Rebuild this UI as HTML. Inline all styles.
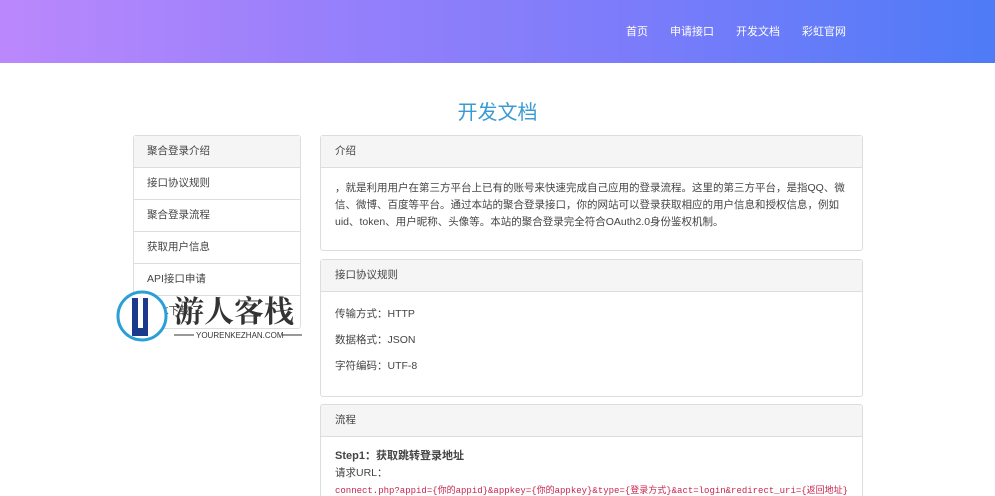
<!DOCTYPE html>
<html><head><meta charset="utf-8"><style>
*{box-sizing:border-box;margin:0;padding:0}
html,body{width:995px;height:496px;overflow:hidden}
body{background:#fff;font-family:"Liberation Sans","Noto Sans CJK SC",sans-serif;font-size:11px;color:#444;position:relative}
.hd{height:63px;background:linear-gradient(90deg,#bb88fc 0%,#9a80fb 30%,#7a7cfa 65%,#4e7bf7 100%);position:relative}
.nav{position:absolute;top:23px;left:626px;color:#fff;font-size:11px}
.nav span{margin-right:22px}
h1{position:absolute;top:96px;left:0;width:995px;text-align:center;font-weight:normal;font-size:20px;color:#3a9bd4}
.side{position:absolute;left:133px;top:135px;width:168px;border:1px solid #ddd;border-radius:3px}
.side div{height:32px;line-height:31px;padding-left:13px;border-bottom:1px solid #ddd;font-size:10.5px;color:#444}
.side div:first-child{background:#f5f5f5}
.side div:last-child{border-bottom:none}
.p{position:absolute;left:320px;width:543px;border:1px solid #ddd;border-radius:3px}
.p .h{height:32px;line-height:31px;background:#f5f5f5;border-bottom:1px solid #ddd;padding-left:14px;font-size:10.5px}
.p .b{padding:12px 14px;font-size:10.5px;line-height:17px}
code{font-family:"Liberation Mono","Noto Sans CJK SC",monospace;font-size:9px;color:#c7254e;white-space:nowrap}
.wm{position:absolute;left:116px;top:290px}
</style></head><body>
<div class="hd"><div class="nav"><span>首页</span><span>申请接口</span><span>开发文档</span><span>彩虹官网</span></div></div>
<h1>开发文档</h1>
<div class="side"><div>聚合登录介绍</div><div>接口协议规则</div><div>聚合登录流程</div><div>获取用户信息</div><div>API接口申请</div><div>SDK下载</div></div>
<div class="p" style="top:135px;height:116px"><div class="h">介绍</div><div class="b" style="padding-top:12px">，就是利用用户在第三方平台上已有的账号来快速完成自己应用的登录流程。这里的第三方平台，是指QQ、微信、微博、百度等平台。通过本站的聚合登录接口，你的网站可以登录获取相应的用户信息和授权信息，例如uid、token、用户昵称、头像等。本站的聚合登录完全符合OAuth2.0身份鉴权机制。</div></div>
<div class="p" style="top:259px;height:138px"><div class="h">接口协议规则</div><div class="b" style="line-height:26px;padding-top:9px">传输方式：HTTP<br>数据格式：JSON<br>字符编码：UTF-8</div></div>
<div class="p" style="top:404px;height:100px;overflow:hidden"><div class="h">流程</div><div class="b" style="padding-top:11px"><b style="font-size:11px">Step1：获取跳转登录地址</b><br>请求URL：<br><code>connect.php?appid={你的appid}&amp;appkey={你的appkey}&amp;type={登录方式}&amp;act=login&amp;redirect_uri={返回地址}</code></div></div>
<div class="wm"><svg width="190" height="56"><circle cx="26" cy="26" r="24" fill="#fff" stroke="#2a9fd8" stroke-width="3"/><rect x="16" y="8" width="16" height="38" fill="#1b3a8c"/><rect x="22" y="8" width="5" height="30" fill="#fff"/><text x="58" y="32" font-size="30" font-weight="bold" fill="#333" font-family="Noto Serif CJK SC,serif">游人客栈</text><line x1="58" y1="45" x2="78" y2="45" stroke="#333"/><text x="80" y="48" font-size="8" fill="#333">YOURENKEZHAN.COM</text><line x1="166" y1="45" x2="186" y2="45" stroke="#333"/></svg></div>
</body></html>
